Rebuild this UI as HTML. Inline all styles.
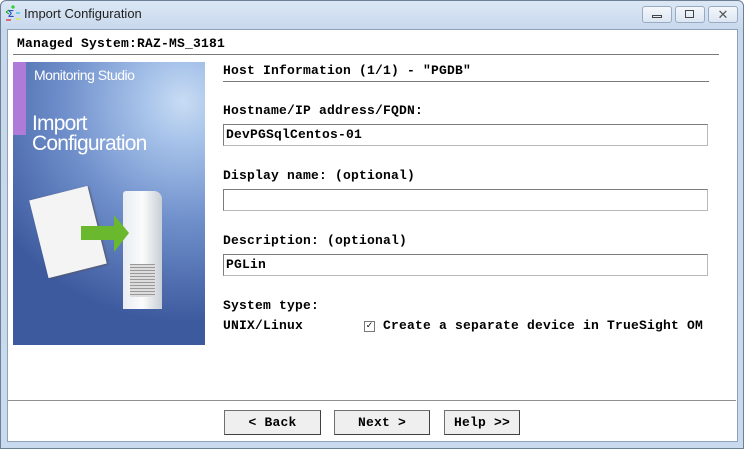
<!DOCTYPE html>
<html><head><style>
body{margin:0;width:744px;height:449px;overflow:hidden;background:#fff;font-family:"Liberation Mono",monospace;font-weight:bold;font-size:13px;letter-spacing:0.2px;color:#000}
.frame{position:absolute;left:0;top:0;width:742px;height:447px;border:1px solid #6d7f95;border-radius:6px 6px 0 0;background:linear-gradient(#dbe7f5,#c7d8ec 30px,#c9daee)}
.client{position:absolute;left:7px;top:29px;width:729px;height:411px;background:#fff;border:1px solid #8ea2bb}
.t{position:absolute;white-space:pre;top:0}
.title{position:absolute;left:24px;top:6px;font-family:"Liberation Sans",sans-serif;font-weight:normal;font-size:13px;letter-spacing:0;color:#222}
.wb{position:absolute;top:6px;height:15px;border:1px solid #9aaac0;border-radius:3px;background:linear-gradient(#f4f7fb,#dce6f2)}
.line{position:absolute;height:1px;background:#7a7a7a}
.field{position:absolute;left:223px;width:483px;height:20px;border:1px solid #b8b8b8;border-top-color:#7c7c7c;border-left-color:#7c7c7c;background:#fff}
.field span{position:absolute;left:2px;top:2px}
.btn{position:absolute;top:410px;height:23px;border:1px solid #707070;border-right-color:#404040;border-bottom-color:#404040;background:#efefef;text-align:center;line-height:23px}
</style></head><body>
<div class="frame"></div>
<svg style="position:absolute;left:5px;top:5px" width="16" height="16"><text x="3" y="12" font-size="10" fill="#3050c0" font-family="Liberation Sans">Σ</text><path d="M6 2h4M8 0v4" stroke="#0c0" /><path d="M1 7l3-2M1 7l3 2" stroke="#0a0" fill="none"/><path d="M1 15h5" stroke="#d00"/><path d="M11 14h4" stroke="#ee0"/><path d="M11 8h4" stroke="#0bd"/></svg>
<div class="title">Import Configuration</div>
<div class="wb" style="left:642px;width:28px"><div style="position:absolute;left:9px;top:8px;width:10px;height:3px;border:1px solid #444;box-sizing:border-box"></div></div>
<div class="wb" style="left:675px;width:28px"><div style="position:absolute;left:9px;top:3px;width:9px;height:8px;border:1px solid #444;box-sizing:border-box"></div></div>
<div class="wb" style="left:708px;width:28px;text-align:center;line-height:15px;font-family:'Liberation Sans';font-weight:normal;font-size:13px;color:#555">✕</div>
<div class="client"></div>
<div class="t" style="left:17px;top:36px">Managed System:RAZ-MS_3181</div>
<div class="line" style="left:13px;top:54px;width:706px"></div>
<div style="position:absolute;left:13px;top:62px;width:192px;height:283px;background:radial-gradient(circle at 170px 40px,#c8dcf3 0,#a7c3ea 40px,#6f8fcb 120px,#3d5a9e 220px);overflow:hidden;letter-spacing:0">
<div style="position:absolute;left:0;top:0;width:13px;height:73px;background:#b07ad8"></div>
<div style="position:absolute;left:21px;top:5px;color:#fff;font-family:'Liberation Sans',sans-serif;font-weight:normal;font-size:14px;letter-spacing:-0.5px">Monitoring Studio</div>
<div style="position:absolute;left:19px;top:52px;color:#fff;font-family:'Liberation Sans',sans-serif;font-weight:normal;font-size:21px;line-height:20px;letter-spacing:-0.8px">Import<br>Configuration</div>
<div style="position:absolute;left:110px;top:129px;width:39px;height:118px;background:linear-gradient(90deg,#e9edf2,#fafbfc 50%,#c9ced6);border-radius:3px 8px 0 0"></div>
<div style="position:absolute;left:117px;top:202px;width:25px;height:33px;background:repeating-linear-gradient(#999 0 1px,#ddd 1px 3px)"></div>
<div style="position:absolute;left:25px;top:130px;width:60px;height:80px;background:#f4f4f4;transform:rotate(-14deg);box-shadow:1px 1px 2px #556"></div>
<svg style="position:absolute;left:68px;top:150px" width="50" height="45"><path d="M0 14h33V3l15 18-15 19V28H0z" fill="#6ab82e"/></svg>
</div>
<div class="t" style="left:223px;top:63px">Host Information (1/1) - "PGDB"</div>
<div class="line" style="left:223px;top:81px;width:486px"></div>
<div class="t" style="left:223px;top:103px">Hostname/IP address/FQDN:</div>
<div class="field" style="top:124px"><span>DevPGSqlCentos-01</span></div>
<div class="t" style="left:223px;top:168px">Display name: (optional)</div>
<div class="field" style="top:189px"></div>
<div class="t" style="left:223px;top:233px">Description: (optional)</div>
<div class="field" style="top:254px"><span>PGLin</span></div>
<div class="t" style="left:223px;top:298px">System type:</div>
<div class="t" style="left:223px;top:318px">UNIX/Linux</div>
<div style="position:absolute;left:364px;top:321px;width:9px;height:9px;border:1px solid #777;background:#fff;font-size:10px;line-height:9px;text-align:center">✓</div>
<div class="t" style="left:383px;top:318px">Create a separate device in TrueSight OM</div>
<div class="line" style="left:8px;top:400px;width:728px;background:#909090"></div>
<div class="btn" style="left:224px;width:95px">&lt; Back</div>
<div class="btn" style="left:334px;width:94px">Next &gt;</div>
<div class="btn" style="left:444px;width:74px">Help &gt;&gt;</div>
</body></html>
